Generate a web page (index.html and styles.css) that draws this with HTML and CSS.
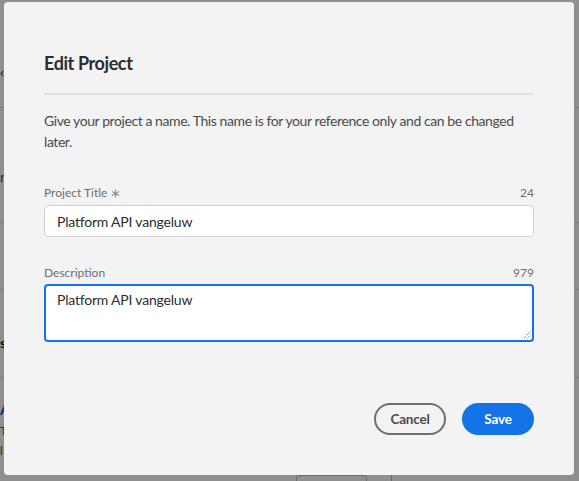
FILE: index.html
```html
<!DOCTYPE html>
<html lang="en">
<head>
<meta charset="utf-8">
<title>Edit Project</title>
<link rel="stylesheet" href="styles.css">
</head>
<body>
<div class="page">
  <div class="page-row r1"><span class="glyph dark">‹</span></div>
  <div class="page-row r2"><span class="glyph blue">n</span></div>
  <div class="page-row r3"></div>
  <div class="page-row r4"><span class="glyph dark bold">s</span></div>
  <div class="page-row r5"><span class="glyph blue bold">A</span><span class="glyph small">T</span><span class="glyph small">l</span></div>
  <div class="page-bottom"><span class="pb-box"></span><span class="pb-box2"></span></div>
</div>
<div class="overlay"></div>
<div class="dialog">
  <h1 class="title">Edit Project</h1>
  <hr class="divider">
  <p class="intro">Give your project a name. This name is for your reference only and can be changed later.</p>
  <div class="field">
    <div class="field-head"><span class="label">Project Title <svg class="req" width="9" height="9" viewBox="0 0 10 10"><path d="M5 0.5V9.5M1.1 2.75L8.9 7.25M1.1 7.25L8.9 2.75" stroke="#8e8e8e" stroke-width="1.3" fill="none"/></svg></span><span class="count">24</span></div>
    <div class="input">Platform API vangeluw</div>
  </div>
  <div class="field">
    <div class="field-head"><span class="label">Description</span><span class="count">979</span></div>
    <div class="textarea">Platform API vangeluw
      <svg class="grip" width="8" height="8" viewBox="0 0 8 8"><path d="M7.5 0.5L0.5 7.5M7.5 4L4 7.5" stroke="#555" stroke-width="1" stroke-dasharray="1 1" fill="none"/></svg>
    </div>
  </div>
  <div class="actions">
    <button class="btn cancel">Cancel</button>
    <button class="btn save">Save</button>
  </div>
</div>
</body>
</html>
```

FILE: styles.css
```css
* { box-sizing: border-box; }
html, body { margin: 0; padding: 0; }
body {
  width: 579px;
  height: 481px;
  overflow: hidden;
  position: relative;
  background: #ffffff;
  font-family: Lato, "Open Sans", sans-serif;
}
.page { width: 579px; height: 481px; }
.page-row { border-bottom: 1px solid #d8d8d8; display: flex; align-items: center; }
.r1 { height: 108px; padding-top: 36px; }
.r2 { height: 115px; padding-top: 24px; }
.r3 { height: 67px; }
.r4 { height: 88px; padding-top: 18px; }
.r5 { height: 97px; flex-direction: column; align-items: flex-start; justify-content: flex-start; border-bottom: none; padding-top: 25px; gap: 8px; }
.glyph { font-size: 14px; line-height: 1; }
.dark { color: #222; }
.blue { color: #0d4fa8; }
.bold { font-weight: 700; }
.small { font-size: 12px; color: #555; }
.page-bottom { display: flex; padding-left: 296px; }
.pb-box { width: 71px; height: 10px; border: 1px solid #bbb; border-radius: 3px; }
.pb-box2 { width: 25px; height: 10px; border-right: 1px solid #bbb; }
.overlay {
  position: absolute; inset: 0;
  background: rgba(0, 0, 0, 0.44);
}
.dialog {
  position: absolute;
  left: 4px; top: 2px;
  width: 570px; height: 473px;
  background: #f3f3f3;
  border-radius: 4px;
  padding: 49px 40px 0 40px;
  display: flex;
  flex-direction: column;
}
.title {
  margin: 0;
  font-size: 18px;
  font-weight: 700;
  letter-spacing: -0.4px;
  color: #2c2c2c;
  line-height: 24px;
}
.divider {
  margin: 18px 0 0 0;
  border: none;
  height: 2px;
  background: #e1e1e1;
}
.intro {
  margin: 15px 0 0 0;
  font-size: 14px;
  letter-spacing: -0.42px;
  line-height: 21px;
  color: #4b4b4b;
  padding-right: 10px;
}
.field { margin-top: 33px; }
.field + .field { margin-top: 28px; }
.field-head {
  display: flex;
  justify-content: space-between;
  align-items: center;
  font-size: 12px;
  color: #6e6e6e;
  line-height: 16px;
  margin-bottom: 4px;
}
.field + .field .field-head { margin-bottom: 3px; }
.label { display: inline-flex; align-items: center; gap: 4px; }
.req { display: block; }
.input {
  height: 32px;
  background: #fff;
  border: 1px solid #d3d3d3;
  border-radius: 4px;
  padding: 0 12px;
  display: flex;
  align-items: center;
  font-size: 14px;
  letter-spacing: -0.2px;
  color: #2c2c2c;
}
.textarea {
  position: relative;
  height: 58px;
  background: #fff;
  border: 2px solid #1473e6;
  border-radius: 4px;
  padding: 4px 11px;
  font-size: 14px;
  letter-spacing: -0.2px;
  line-height: 20px;
  color: #2c2c2c;
}
.grip { position: absolute; right: 1px; bottom: 1px; }
.actions {
  margin-top: 61px;
  display: flex;
  justify-content: flex-end;
  gap: 16px;
}
.btn {
  height: 32px;
  width: 72px;
  border-radius: 16px;
  font-family: inherit;
  font-size: 13.5px;
  font-weight: 700;
  letter-spacing: -0.2px;
  padding: 0;
  cursor: pointer;
}
.cancel { background: transparent; border: 2px solid #6e6e6e; color: #4b4b4b; }
.save { background: #1473e6; border: 2px solid #1473e6; color: #fff; }
```
